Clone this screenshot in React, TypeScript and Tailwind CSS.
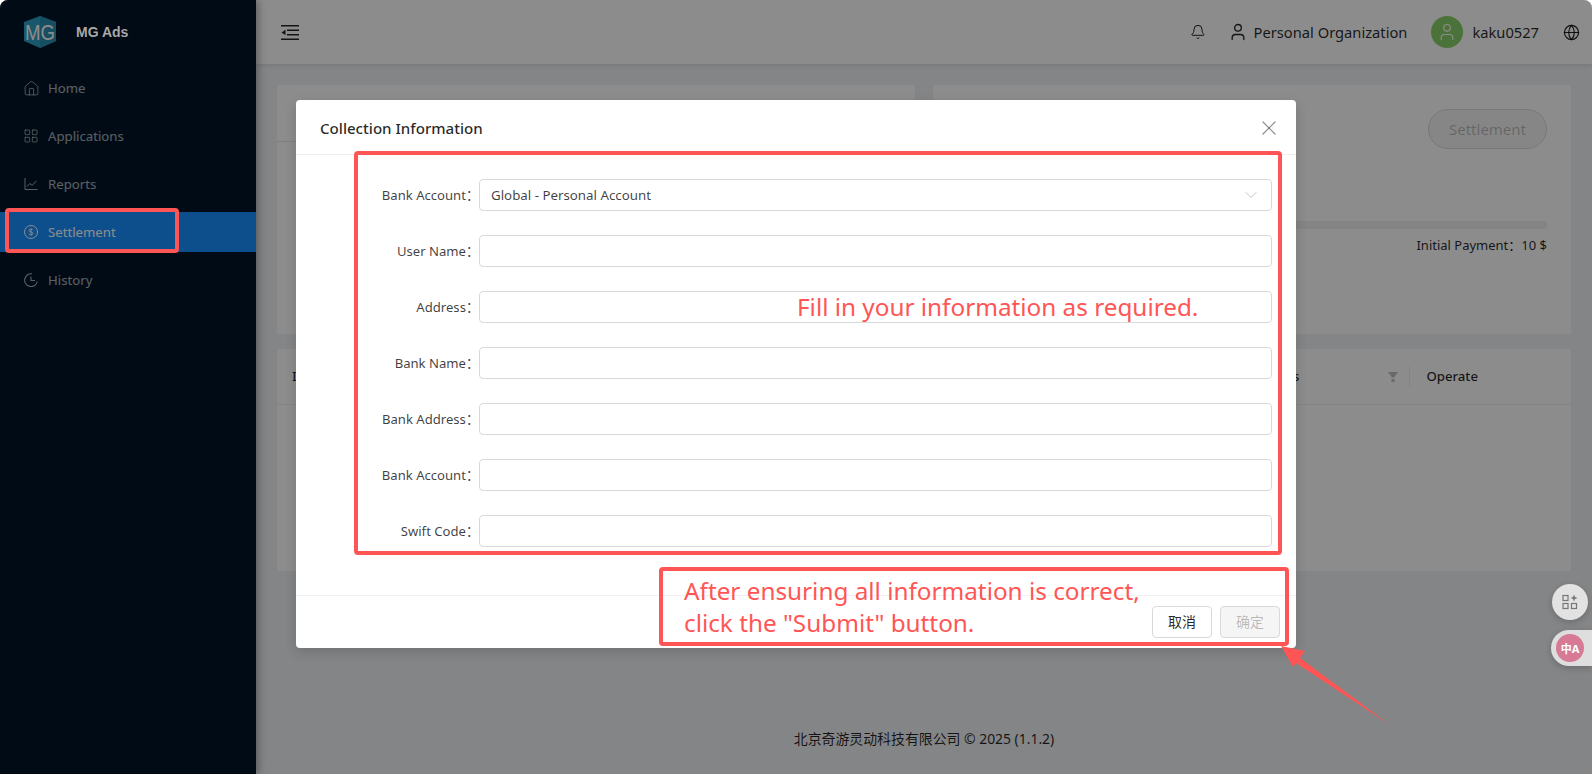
import React from 'react';
import { Bell, ChevronDown, Globe, House, LayoutGrid, User, X } from 'lucide-react';

const FONT = "font-['Noto_Sans','Noto_Sans_CJK_SC',sans-serif]";

const ChartIcon = ({ className }: { className?: string }) => (
  <svg viewBox="0 0 14 14" fill="none" stroke="currentColor" strokeWidth="1" className={className}>
    <path d="M1 1v11.5H13.500" />
    <path d="M3 9.500l2.800-3 2.200 1.800L12.500 4" />
  </svg>
);

const DollarIcon = ({ className }: { className?: string }) => (
  <svg viewBox="0 0 14 14" fill="none" stroke="currentColor" strokeWidth="1" className={className}>
    <circle cx="7" cy="7" r="6.500" />
    <path d="M9 5.200C8.700 4.500 8 4.200 7 4.200c-1.100 0-1.900.5-1.900 1.400C5.100 7.600 9 6.300 9 8.400c0 .9-.9 1.400-2 1.400-1.100 0-1.800-.4-2.100-1.200M7 3.300v7.400" strokeWidth="0.9" />
  </svg>
);

const HistoryIcon = ({ className }: { className?: string }) => (
  <svg viewBox="0 0 14 14" fill="none" stroke="currentColor" strokeWidth="1.100" className={className}>
    <path d="M13.300 8.500A6.400 6.400 0 1 1 8 0.800" />
    <path d="M7 3.500V7.500h4" />
  </svg>
);

const FoldIcon = ({ className }: { className?: string }) => (
  <svg viewBox="0 0 18 15" fill="currentColor" className={className}>
    <rect x="0" y="0" width="18" height="1.500" />
    <rect x="6" y="4.500" width="12" height="1.500" />
    <rect x="6" y="9" width="12" height="1.500" />
    <rect x="0" y="13.500" width="18" height="1.500" />
    <path d="M0.500 7.500L4.500 4.700V10.300Z" />
  </svg>
);

const Logo = () => (
  <svg viewBox="0 0 32 32" className="h-8 w-8">
    <polygon points="16,0 32,6 32,25 16,32 0,25 0,6" fill="#2f9fc7" />
    <polygon points="16,0 32,6 32,25 16,32" fill="#2a8fb3" />
    <text x="1" y="24" fontSize="22" textLength="30" lengthAdjust="spacingAndGlyphs" fontFamily="Liberation Sans, sans-serif" fill="#ffffff">MG</text>
  </svg>
);

const MENU = [
  { label: 'Home', icon: House, size: 'h-[17px] w-[17px]' },
  { label: 'Applications', icon: LayoutGrid, size: 'h-[16px] w-[16px]' },
  { label: 'Reports', icon: ChartIcon, size: 'h-[14px] w-[14px]' },
  { label: 'Settlement', icon: DollarIcon, size: 'h-[14px] w-[14px]', active: true },
  { label: 'History', icon: HistoryIcon, size: 'h-[14px] w-[14px]' },
];

const FIELDS = ['User Name', 'Address', 'Bank Name', 'Bank Address', 'Bank Account', 'Swift Code'];

const Sidebar = () => (
  <aside className="relative flex w-[256px] shrink-0 flex-col bg-[#001529] shadow-[2px_0_8px_rgba(0,0,0,0.35)]">
    <div className="flex h-[64px] items-center gap-[20px] pl-6">
      <Logo />
      <span className="relative z-30 font-['Liberation_Sans',sans-serif] text-sm font-bold text-[#a8a8a8]">MG Ads</span>
    </div>
    <nav className="mt-1 flex flex-col gap-2">
      {MENU.map(({ label, icon: Icon, size, active }) => (
        <div
          key={label}
          className={`flex h-10 items-center gap-[10px] pl-6 text-[13.200px] ${
            active ? 'bg-[#1890ff] text-white' : 'text-white/65'
          }`}
        >
          <span className="flex w-[14px] justify-center">
            <Icon className={`shrink-0 ${size}`} strokeWidth={1.200} />
          </span>
          <span className="pt-px">{label}</span>
        </div>
      ))}
    </nav>
  </aside>
);

const Header = () => (
  <header className="flex h-[64px] shrink-0 items-center bg-white pl-[25px] pr-3 text-[rgba(0,0,0,0.85)] shadow-[0_1px_4px_rgba(0,21,41,0.12)]">
    <FoldIcon className="h-[15px] w-[18px]" />
    <div className="ml-auto flex items-center">
      <Bell className="h-4 w-4" strokeWidth={1.500} />
      <User className="ml-[22px] h-5 w-5" strokeWidth={1.600} />
      <span className="ml-[6px] text-[14.700px]">Personal Organization</span>
      <div className="ml-6 flex h-8 w-8 items-center justify-center rounded-full bg-[#87d068] text-white">
        <User className="h-5 w-5" strokeWidth={1.400} />
      </div>
      <span className="ml-[9px] text-[14.700px]">kaku0527</span>
      <Globe className="ml-6 h-[17px] w-[17px]" strokeWidth={1.700} />
    </div>
  </header>
);

const Dashboard = () => (
  <main className="flex min-w-0 flex-1 flex-col px-[21px] pt-[21px]">
    <div className="grid h-[249px] grid-cols-2 gap-[18px]">
      <section className="bg-white">
        <div className="h-[57px] border-b border-[#e8e8e8]" />
      </section>
      <section className="flex flex-col bg-white px-6 pt-6">
        <div className="flex justify-end">
          <button className="h-10 w-[119px] rounded-full border border-[#d9d9d9] bg-[#f5f5f5] text-[15px] text-black/25">
            Settlement
          </button>
        </div>
        <div className="mt-[72px] h-2 rounded-full bg-[#f0f0f0]" />
        <div className="mt-[7px] text-right text-[13px] text-black/85">Initial Payment：10 $</div>
      </section>
    </div>
    <section className="mt-[15px] h-[222px] bg-white">
      <div className="flex h-[56px] items-center border-b border-[#f0f0f0] text-[13.200px] font-medium text-black/85">
        <span className="ml-[15px]">ID</span>
        <span className="ml-auto">Status</span>
        <svg viewBox="0 0 12 12" fill="#bfbfbf" className="ml-[88px] h-3 w-3">
          <path d="M1 1h10L7.500 5.500v1h-3v-1zM4.500 8h3v3h-3z" />
        </svg>
        <span className="ml-[10px] h-[22px] w-px bg-[#f0f0f0]" />
        <span className="ml-4 mr-[93px]">Operate</span>
      </div>
    </section>
    <footer className="mt-[158px] text-center text-[13.900px] text-black/85">北京奇游灵动科技有限公司 © 2025 (1.1.2)</footer>
  </main>
);

const Field = ({ label, children }: { label: string; children?: React.ReactNode }) => (
  <div className="flex h-8 items-center">
    <label className="w-[183px] shrink-0 pt-px text-right text-[13.100px] text-black/75">{label}：</label>
    <div className="flex h-8 flex-1 items-center justify-between rounded-sm border border-[#d9d9d9] bg-white px-[11px] text-[13.300px] text-black/75">
      {children}
    </div>
  </div>
);

const Modal = () => (
  <div className="absolute left-[296px] top-[100px] z-30 flex h-[548px] w-[1000px] flex-col rounded-sm bg-white shadow-[0_4px_12px_rgba(0,0,0,0.15)]">
    <div className="flex h-[55px] shrink-0 items-center justify-between border-b border-[#f0f0f0] px-6 pt-[2px]">
      <h2 className="text-[15.100px] font-medium text-black/85">Collection Information</h2>
      <X className="mr-[-9px] h-6 w-6 text-black/45" strokeWidth={1.200} />
    </div>
    <div className="flex flex-1 flex-col gap-6 pr-6 pt-[24px]">
      <Field label="Bank Account">
        <span className="pt-px">Global - Personal Account</span>
        <ChevronDown className="mr-[-1px] h-5 w-5 text-black/25" strokeWidth={1.100} />
      </Field>
      {FIELDS.map((f) => (
        <Field key={f} label={f} />
      ))}
    </div>
    <div className="flex h-[53px] shrink-0 items-start justify-end gap-2 border-t border-[#f0f0f0] pr-4 pt-[10px]">
      <button className="h-8 w-[60px] rounded-sm border border-[#d9d9d9] bg-white text-sm text-black/85">取消</button>
      <button className="h-8 w-[60px] rounded-sm border border-[#d9d9d9] bg-[#f5f5f5] text-sm text-black/25">确定</button>
    </div>
  </div>
);

const Annotations = () => (
  <>
    <div className="absolute left-[5px] top-[208px] z-30 h-[45px] w-[174px] rounded-sm border-4 border-[#ff5555]" />
    <div className="absolute left-[354px] top-[151px] z-40 h-[404px] w-[928px] rounded-sm border-4 border-[#ff5555]" />
    <div className="absolute left-[659px] top-[567px] z-40 h-[79px] w-[630px] rounded-sm border-4 border-[#ff5555]" />
    <p className="absolute left-[797px] top-[290px] z-40 text-[24.300px] leading-[34px] text-[#ff5555]">Fill in your information as required.</p>
    <p className="absolute left-[684px] top-[575px] z-40 text-[24.300px] leading-[32px] text-[#ff5555]">
      After ensuring all information is correct,
      <br />
      click the "Submit" button.
    </p>
    <svg viewBox="0 0 1592 774" className="pointer-events-none absolute inset-0 z-40 h-full w-full">
      <polygon points="1281,646 1305,651 1300,658 1390,725 1296,663 1293,667" fill="#ff5555" />
    </svg>
  </>
);

const FloatingTools = () => (
  <>
    <div className="absolute left-[1552px] top-[584px] z-30 flex h-9 w-9 items-center justify-center rounded-full bg-[#e2e2e2] text-[#777] shadow-[0_2px_6px_rgba(0,0,0,0.2)]">
      <svg viewBox="0 0 16 16" fill="none" stroke="currentColor" strokeWidth="1.200" className="h-4 w-4">
        <rect x="1" y="1.500" width="5" height="5" />
        <rect x="1" y="9.500" width="5" height="5" />
        <rect x="9.500" y="9.500" width="5" height="5" />
        <path d="M12 0.500L13 3 15.500 4 13 5 12 7.500 11 5 8.500 4 11 3Z" fill="currentColor" stroke="none" />
      </svg>
    </div>
    <div className="absolute left-[1551px] top-[630px] z-30 flex h-9 w-[41px] items-center rounded-l-full bg-[#dedede] pl-[5px] shadow-[0_2px_6px_rgba(0,0,0,0.2)]">
      <div className="flex h-7 w-7 items-center justify-center rounded-full bg-[#d67a95] text-[11px] font-bold leading-none text-white">
        中A
      </div>
    </div>
  </>
);

export default function App() {
  return (
    <div className={`relative flex h-[774px] w-[1592px] overflow-hidden rounded-t-lg bg-[#f0f2f5] ${FONT}`}>
      <Sidebar />
      <div className="flex min-w-0 flex-1 flex-col">
        <Header />
        <Dashboard />
      </div>
      {/* modal mask */}
      <div className="absolute inset-0 z-20 bg-black/45" />
      <Modal />
      <FloatingTools />
      <Annotations />
    </div>
  );
}
